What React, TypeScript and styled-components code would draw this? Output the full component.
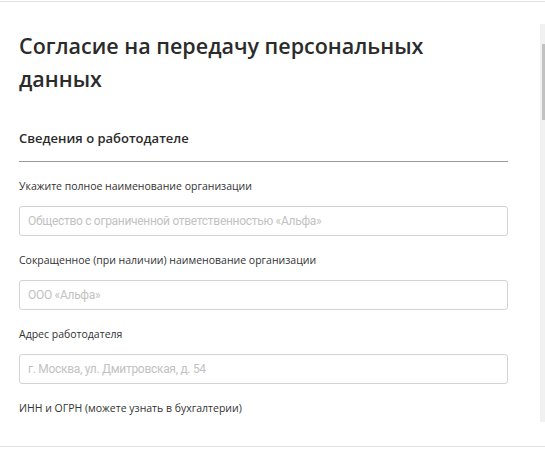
import React from 'react';
import styled, { createGlobalStyle } from 'styled-components';

const GlobalStyle = createGlobalStyle`
  html, body {
    margin: 0;
    padding: 0;
    background: #ffffff;
  }
  * {
    box-sizing: border-box;
  }
`;

const Frame = styled.div`
  width: 545px;
  height: 458px;
  display: flex;
  flex-direction: column;
  background: #fff;
  overflow: hidden;
  font-family: 'Open Sans', 'Noto Sans', sans-serif;
  color: #333;
`;

const TopRule = styled.div`
  margin-top: 1px;
  height: 1px;
  background: #e2e2e2;
`;

const Body = styled.div`
  display: flex;
  height: 445px;
  border-bottom: 1px solid #e2e2e2;
`;

const Content = styled.div`
  flex: 1;
  padding: 27px 32px 0 19px;
`;

const Title = styled.h1`
  margin: 0;
  max-width: 440px;
  font-size: 21.5px;
  line-height: 33px;
  font-weight: 600;
  color: #2b2b2b;
`;

const SectionHeading = styled.h2`
  margin: 33px 0 0;
  font-size: 13px;
  font-weight: 600;
  line-height: 20px;
  color: #2b2b2b;
`;

const Divider = styled.div`
  margin-top: 13px;
  height: 1px;
  background: #9a9a9a;
`;

const Fields = styled.div`
  display: flex;
  flex-direction: column;
  gap: 15px;
  padding-top: 15px;
`;

const Field = styled.label`
  display: flex;
  flex-direction: column;
  gap: 11px;
`;

const Label = styled.span`
  font-size: 10.5px;
  line-height: 18px;
  color: #333;
`;

const Input = styled.input`
  height: 30px;
  width: 100%;
  border: 1px solid #d3d3d3;
  border-radius: 3px;
  padding: 0 8px;
  font-family: Roboto, 'Liberation Sans', Arial, sans-serif;
  font-size: 12px;
  letter-spacing: -0.3px;
  color: #333;
  outline: none;

  &::placeholder {
    color: #c2c2c2;
  }
`;

const Track = styled.div`
  width: 5px;
  margin: 22px 0 24px;
  background: #f1f1f1;
  position: relative;
`;

const Thumb = styled.div`
  position: absolute;
  top: 20px;
  right: 0;
  width: 3px;
  height: 76px;
  background: #c1c1c1;
`;

const fields = [
  { label: 'Укажите полное наименование организации', placeholder: 'Общество с ограниченной ответственностью «Альфа»' },
  { label: 'Сокращенное (при наличии) наименование организации', placeholder: 'ООО «Альфа»' },
  { label: 'Адрес работодателя', placeholder: 'г. Москва, ул. Дмитровская, д. 54' },
  { label: 'ИНН и ОГРН (можете узнать в бухгалтерии)', placeholder: '' },
];

const App: React.FC = () => {
  return (
    <>
      <GlobalStyle />
      <Frame>
        <TopRule />
        <Body>
          <Content>
            <Title>Согласие на передачу персональных данных</Title>
            <SectionHeading>Сведения о работодателе</SectionHeading>
            <Divider />
            <Fields>
              {fields.map((f) => (
                <Field key={f.label}>
                  <Label>{f.label}</Label>
                  {f.placeholder && <Input type="text" placeholder={f.placeholder} />}
                </Field>
              ))}
            </Fields>
          </Content>
          <Track>
            <Thumb />
          </Track>
        </Body>
      </Frame>
    </>
  );
};

export default App;
